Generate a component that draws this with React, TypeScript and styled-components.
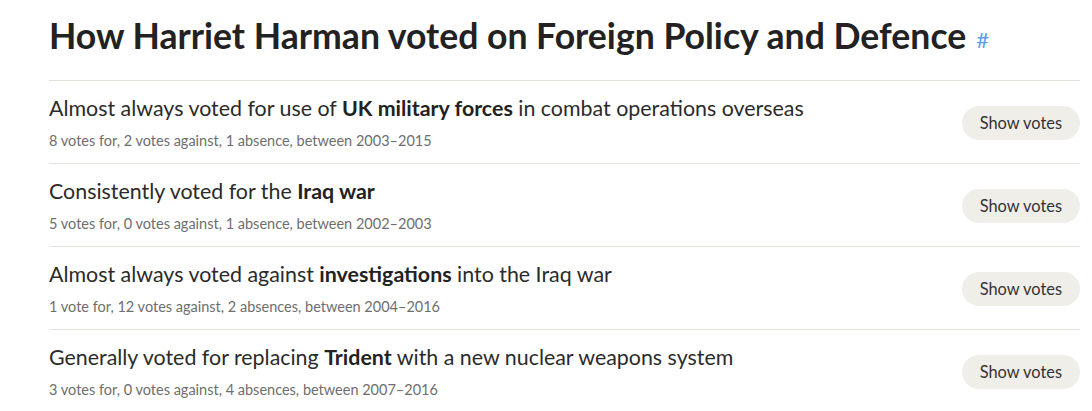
import React from "react";
import styled, { createGlobalStyle } from "styled-components";

const Global = createGlobalStyle`
  html, body { margin: 0; padding: 0; background: #ffffff; }
  body { font-family: Lato, "Noto Sans", sans-serif; color: #333333; }
`;

const Page = styled.main`
  padding: 0 12px 0 49px;
`;

const Heading = styled.h2`
  margin: 13.6px 0 19.4px;
  font-size: 35.6px;
  line-height: 43px;
  font-weight: 700;
  color: #222222;
  white-space: nowrap;
`;

const Anchor = styled.a`
  font-size: 22px;
  font-weight: 400;
  color: #5b9fe8;
  text-decoration: none;
  margin-left: 10px;
  vertical-align: 1px;
`;

const List = styled.ul`
  list-style: none;
  margin: 0;
  padding: 0;
`;

const Row = styled.li`
  display: flex;
  align-items: center;
  justify-content: space-between;
  gap: 24px;
  border-top: 1px solid #e4e2dc;
  padding: 13.4px 0 11.9px;
`;

const Text = styled.div`
  display: flex;
  flex-direction: column;
  gap: 8.7px;
`;

const Summary = styled.p`
  margin: 0;
  font-size: 21.4px;
  line-height: 28px;
  color: #2b2b2b;
  b { font-weight: 700; color: #222; }
`;

const Counts = styled.p`
  margin: 0;
  font-size: 14.5px;
  line-height: 20px;
  color: #6e6e6e;
`;

const Button = styled.button`
  flex: none;
  height: 34px;
  padding: 0 18px;
  border: none;
  border-radius: 17px;
  background: #f0eee9;
  color: #333333;
  font-family: inherit;
  font-size: 16.4px;
  cursor: pointer;
`;

type Item = { pre: string; bold: string; post: string; counts: string };

const items: Item[] = [
  {
    pre: "Almost always voted for use of ",
    bold: "UK military forces",
    post: " in combat operations overseas",
    counts: "8 votes for, 2 votes against, 1 absence, between 2003–2015",
  },
  {
    pre: "Consistently voted for the ",
    bold: "Iraq war",
    post: "",
    counts: "5 votes for, 0 votes against, 1 absence, between 2002–2003",
  },
  {
    pre: "Almost always voted against ",
    bold: "investigations",
    post: " into the Iraq war",
    counts: "1 vote for, 12 votes against, 2 absences, between 2004–2016",
  },
  {
    pre: "Generally voted for replacing ",
    bold: "Trident",
    post: " with a new nuclear weapons system",
    counts: "3 votes for, 0 votes against, 4 absences, between 2007–2016",
  },
];

export default function App() {
  return (
    <>
      <Global />
      <Page>
        <Heading>
          How Harriet Harman voted on Foreign Policy and Defence
          <Anchor href="#">#</Anchor>
        </Heading>
        <List>
          {items.map((it) => (
            <Row key={it.bold}>
              <Text>
                <Summary>
                  {it.pre}
                  <b>{it.bold}</b>
                  {it.post}
                </Summary>
                <Counts>{it.counts}</Counts>
              </Text>
              <Button>Show votes</Button>
            </Row>
          ))}
        </List>
      </Page>
    </>
  );
}
